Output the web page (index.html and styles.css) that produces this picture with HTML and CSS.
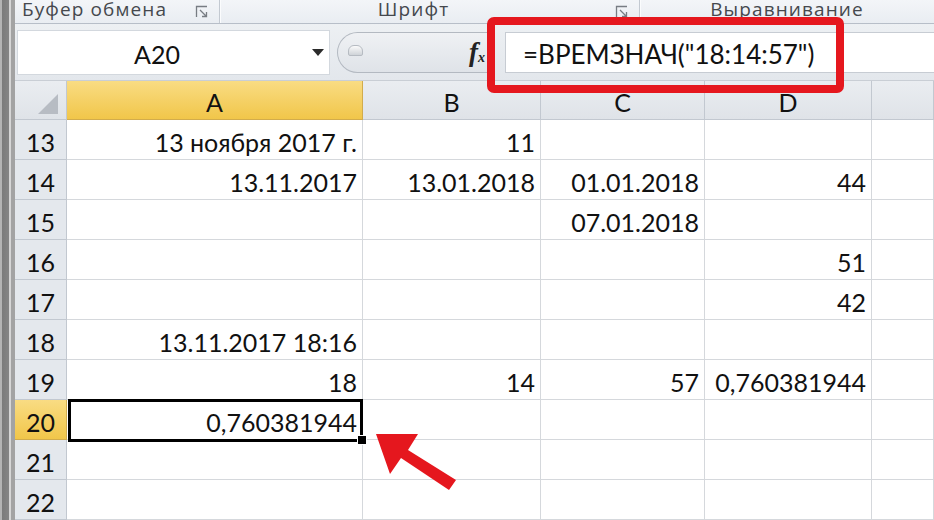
FILE: index.html
```html
<!DOCTYPE html>
<html lang="ru">
<head>
    <meta charset="UTF-8">
    <title>ВРЕМЗНАЧ</title>
    <link rel="stylesheet" href="styles.css">
</head>
<body>

    <div class="window">
        <div class="edge"></div>

        <div class="app">
            <!-- Ribbon group captions -->
            <div class="ribbon">
                <div class="group group-clip">
                    <span class="caption">Буфер обмена</span>
                    <svg class="launcher" viewBox="0 0 14 14"><path d="M1.5 12V1.5H12M5 5l6 6M11.5 7v4.5H7"/></svg>
                </div>
                <div class="group group-font">
                    <span class="caption">Шрифт</span>
                    <svg class="launcher" viewBox="0 0 14 14"><path d="M1.5 12V1.5H12M5 5l6 6M11.5 7v4.5H7"/></svg>
                </div>
                <div class="group group-align">
                    <span class="caption">Выравнивание</span>
                </div>
            </div>

            <!-- Formula bar -->
            <div class="formula-bar">
                <div class="name-box">
                    <span class="ref">A20</span>
                    <span class="caret"></span>
                </div>
                <div class="fx-area">
                    <span class="grip"></span>
                    <span class="fx"><i>f</i><sub>x</sub></span>
                </div>
                <div class="formula">=ВРЕМЗНАЧ("18:14:57")</div>
            </div>

            <!-- Sheet -->
            <div class="sheet">
                <div class="corner"><svg viewBox="0 0 20 20"><polygon points="20,0 20,20 0,20"/></svg></div>
                <div class="col-head active">A</div>
                <div class="col-head">B</div>
                <div class="col-head">C</div>
                <div class="col-head">D</div>
                <div class="col-head"></div>

                <div class="row-head">13</div>
                <div class="cell">13 ноября 2017 г.</div>
                <div class="cell">11</div>
                <div class="cell"></div>
                <div class="cell"></div>
                <div class="cell"></div>

                <div class="row-head">14</div>
                <div class="cell">13.11.2017</div>
                <div class="cell">13.01.2018</div>
                <div class="cell">01.01.2018</div>
                <div class="cell">44</div>
                <div class="cell"></div>

                <div class="row-head">15</div>
                <div class="cell"></div>
                <div class="cell"></div>
                <div class="cell">07.01.2018</div>
                <div class="cell"></div>
                <div class="cell"></div>

                <div class="row-head">16</div>
                <div class="cell"></div>
                <div class="cell"></div>
                <div class="cell"></div>
                <div class="cell">51</div>
                <div class="cell"></div>

                <div class="row-head">17</div>
                <div class="cell"></div>
                <div class="cell"></div>
                <div class="cell"></div>
                <div class="cell">42</div>
                <div class="cell"></div>

                <div class="row-head">18</div>
                <div class="cell">13.11.2017 18:16</div>
                <div class="cell"></div>
                <div class="cell"></div>
                <div class="cell"></div>
                <div class="cell"></div>

                <div class="row-head">19</div>
                <div class="cell">18</div>
                <div class="cell">14</div>
                <div class="cell">57</div>
                <div class="cell">0,760381944</div>
                <div class="cell"></div>

                <div class="row-head active">20</div>
                <div class="cell selected">0,760381944</div>
                <div class="cell"></div>
                <div class="cell"></div>
                <div class="cell"></div>
                <div class="cell"></div>

                <div class="row-head">21</div>
                <div class="cell"></div>
                <div class="cell"></div>
                <div class="cell"></div>
                <div class="cell"></div>
                <div class="cell"></div>

                <div class="row-head">22</div>
                <div class="cell"></div>
                <div class="cell"></div>
                <div class="cell"></div>
                <div class="cell"></div>
                <div class="cell"></div>
            </div>
        </div>
    </div>

    <!-- Annotations drawn over the screenshot -->
    <div class="highlight"></div>
    <svg class="arrow" viewBox="0 0 934 520">
        <polygon points="376,434 418,434 408,450 456,480 449,490 401,458 390,474"/>
    </svg>

</body>
</html>
```

FILE: styles.css
```css
/* General */
body {
    margin: 0;
    padding: 0;
    font-family: 'Lato', 'Open Sans', sans-serif;
    color: #111;
    background-color: #ffffff;
    overflow: hidden;
}

.window {
    display: flex;
    height: 520px;
}

/* Dark window edge on the left */
.edge {
    width: 15px;
    flex: none;
    background: linear-gradient(to right, #b4b4b4 0, #b4b4b4 2px, #7b7b7b 2px, #858585 9px, #d6d6d6 9px, #d6d6d6 11px, #a3a3a3 11px, #a3a3a3 15px);
}

.app {
    flex: 1;
    display: flex;
    flex-direction: column;
    min-width: 0;
}

/* Ribbon captions */
.ribbon {
    height: 24px;
    display: flex;
    background: linear-gradient(#f3f5f8, #e9edf2);
    border-bottom: 1px solid #b7bec8;
    overflow: hidden;
}

.group {
    display: flex;
    align-items: flex-end;
    box-sizing: border-box;
    padding-bottom: 3px;
    border-right: 1px solid #c3c9d1;
    box-shadow: 1px 0 0 #fbfcfd;
}

.caption {
    font-family: 'Open Sans', sans-serif;
    font-size: 19px;
    line-height: 21px;
    color: #45484d;
    letter-spacing: 1.1px;
}

.launcher {
    width: 14px;
    height: 14px;
    margin-bottom: 1px;
    fill: none;
    stroke: #777c83;
    stroke-width: 1.3;
}

.group-clip {
    width: 205px;
    padding-left: 7px;
    padding-right: 10px;
    justify-content: space-between;
}

.group-font {
    width: 420px;
    padding-right: 10px;
}

.group-font .caption {
    flex: 1;
    text-align: center;
    padding-right: 8px;
}

.group-align {
    flex: 1;
    justify-content: center;
    border-right: none;
    box-shadow: none;
}

/* Formula bar */
.formula-bar {
    height: 58px;
    box-sizing: border-box;
    display: flex;
    align-items: flex-start;
    padding-top: 6px;
    background: linear-gradient(#edf0f3, #e3e7ec);
}

.name-box {
    margin-left: 2px;
    width: 313px;
    height: 45px;
    box-sizing: border-box;
    display: flex;
    align-items: center;
    background-color: #ffffff;
    border: 1px solid #d3d8de;
}

.ref {
    flex: 1;
    text-align: center;
    font-size: 25px;
    padding: 3px 16px 0 0;
}

.caret {
    width: 0;
    height: 0;
    margin-right: 5px;
    border-left: 6px solid transparent;
    border-right: 6px solid transparent;
    border-top: 7px solid #2b2b2b;
}

.fx-area {
    margin-top: 2px;
    margin-left: 7px;
    width: 157px;
    height: 41px;
    box-sizing: border-box;
    display: flex;
    align-items: center;
    justify-content: space-between;
    padding: 0 9px 0 10px;
    border: 1px solid #b3b9c1;
    border-right: none;
    border-radius: 21px 0 0 21px;
    background: linear-gradient(#eff1f4, #dfe3e8);
}

.grip {
    width: 13px;
    height: 9px;
    margin-top: -5px;
    border-radius: 6px 6px 2px 2px;
    border: 1px solid #b6bbc2;
    background: linear-gradient(#fbfbfb, #cfd3d8);
}

.fx {
    font-family: 'Liberation Serif', serif;
    font-weight: bold;
    font-size: 27px;
    color: #222;
}

.fx sub {
    font-size: 14px;
    font-style: italic;
    vertical-align: -1px;
}

.formula {
    margin-top: 2px;
    margin-left: 11px;
    flex: 1;
    height: 41px;
    box-sizing: border-box;
    display: flex;
    align-items: center;
    padding: 3px 0 0 17px;
    background-color: #ffffff;
    border: 1px solid #c7ccd3;
    border-right: none;
    font-size: 26px;
}

/* Sheet grid */
.sheet {
    display: grid;
    grid-template-columns: 52px 296px 178px 164px 167px 1fr;
    grid-template-rows: 39px;
    grid-auto-rows: 40px;
    border-top: 1px solid #c9ced5;
}

.corner,
.col-head,
.row-head {
    box-sizing: border-box;
    background: linear-gradient(#eaedf1, #dfe3e8);
    border-right: 1px solid #c2c8d0;
    border-bottom: 1px solid #c2c8d0;
    text-align: center;
    font-size: 25px;
    padding-top: 3px;
    line-height: 36px;
}

.corner {
    display: flex;
    align-items: flex-end;
    justify-content: flex-end;
    padding: 0 8px 5px 0;
}

.corner svg {
    width: 20px;
    height: 20px;
    fill: #b7bcc3;
}

.row-head {
    background: #e4e8ed;
    padding-top: 4px;
}

.col-head.active,
.row-head.active {
    background: linear-gradient(#f9dc83, #f1c64a);
    border-color: #d2ac4c;
}

.cell {
    box-sizing: border-box;
    border-right: 1px solid #d5d8dc;
    border-bottom: 1px solid #d5d8dc;
    text-align: right;
    padding: 5px 5px 0 0;
    font-size: 25px;
    line-height: 35px;
    white-space: nowrap;
}

/* Active cell frame and fill handle */
.cell.selected {
    position: relative;
}

.cell.selected::before {
    content: '';
    position: absolute;
    left: 1px;
    top: -1px;
    right: -1px;
    bottom: -3px;
    border: 3px solid #000;
}

.cell.selected::after {
    content: '';
    position: absolute;
    right: -5px;
    bottom: -6px;
    width: 8px;
    height: 8px;
    background-color: #000;
    border: 1px solid #fff;
}

/* Red annotations */
.highlight {
    position: absolute;
    left: 487px;
    top: 17px;
    width: 357px;
    height: 76px;
    box-sizing: border-box;
    border: 8px solid #e5171e;
    border-radius: 7px;
}

.arrow {
    position: absolute;
    left: 0;
    top: 0;
    width: 934px;
    height: 520px;
    fill: #e5171e;
    pointer-events: none;
}
```
